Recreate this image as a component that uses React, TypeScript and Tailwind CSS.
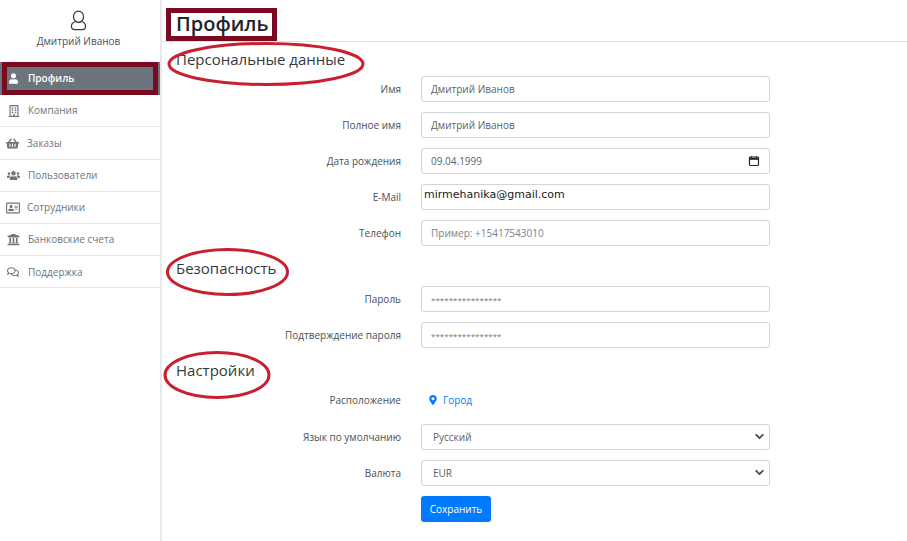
import { ChevronDown } from "lucide-react";
import { FaMapMarkerAlt, FaRegAddressCard, FaRegBuilding, FaRegComments, FaShoppingBasket, FaUniversity, FaUser, FaUsers } from "react-icons/fa";
import type { ReactNode } from "react";

const menu = [
  { label: "Компания", icon: <FaRegBuilding className="w-3 h-3" />, x: "pl-[8px]", gap: "gap-[8px]", h: "h-[32px]" },
  { label: "Заказы", icon: <FaShoppingBasket className="w-[13px] h-[13px]" />, x: "pl-[6px]", gap: "gap-[8px]", h: "h-[33px]" },
  { label: "Пользователи", icon: <FaUsers className="w-[13px] h-[13px]" />, x: "pl-[7px]", gap: "gap-[8px]", h: "h-[32px]" },
  { label: "Сотрудники", icon: <FaRegAddressCard className="w-[14px] h-[14px]" />, x: "pl-[6px]", gap: "gap-[7px]", h: "h-[32px]" },
  { label: "Банковские счета", icon: <FaUniversity className="w-[13px] h-[13px]" />, x: "pl-[7px]", gap: "gap-[8px]", h: "h-[32px]" },
  { label: "Поддержка", icon: <FaRegComments className="w-3 h-3" />, x: "pl-[7px]", gap: "gap-[9px]", h: "h-[32px] pt-[1px]" },
];

function Row({ label, children }: { label: string; children: ReactNode }) {
  return (
    <div className="flex items-center gap-5 h-[26px]">
      <label className="w-[239px] text-right text-[10px] text-[#495057]">{label}</label>
      <div className="w-[349px] relative">{children}</div>
    </div>
  );
}

const boxCls = "block w-full h-[26px] rounded-[3px] border border-[#ced4da] bg-white outline-none";
const inputCls = `${boxCls} px-[9px] text-[10px] text-[#5a6268]`;

function Field(props: { value?: string; placeholder?: string }) {
  return <input readOnly className={`${inputCls} placeholder:text-[#7b8187]`} value={props.value} placeholder={props.placeholder} />;
}

function Stars() {
  return <input readOnly className={`${boxCls} px-[9px] text-[8px] text-[#6c757d]`} value="****************" />;
}

function Picker({ value }: { value: string }) {
  return (
    <>
      <select defaultValue={value} className={`${inputCls} appearance-none pl-[11px]`}>
        <option>{value}</option>
      </select>
      <ChevronDown className="absolute right-[4px] top-[6px] w-[13px] h-[13px] text-[#495057]" strokeWidth={3.5} />
    </>
  );
}

export default function App() {
  return (
    <div className="relative flex w-[907px] h-[541px] overflow-hidden bg-white font-['Open_Sans',sans-serif]">
      {/* Sidebar */}
      <aside className="w-[162px] shrink-0 border-r-2 border-[#e6e8ea]">
        <div className="h-[62px] flex flex-col items-center pt-[10px] pr-[3px]">
          <svg viewBox="0 0 18 22" className="w-[17px] h-[21px]" fill="none" stroke="#343a40" strokeWidth="1.3">
            <ellipse cx="9" cy="7" rx="5.3" ry="6" />
            <path d="M5.5 12.3C3 13 1.5 14.8 1.5 17c0 2.6 1.6 3.6 3.6 3.6h7.8c2 0 3.6-1 3.6-3.6 0-2.2-1.5-4-4-4.7" />
          </svg>
          <span className="mt-[3px] text-[10px] text-[#495057]">Дмитрий Иванов</span>
        </div>
        <div className="relative h-[33px] bg-[#6c757d] text-white flex items-center pl-[9px] gap-[10px] text-[10px] font-semibold">
          <FaUser className="w-[9px] h-[11px]" />
          Профиль
          <div className="absolute left-[2px] top-0 w-[156px] h-[33px] border-[5px] border-[#7a0a20]" />
        </div>
        {menu.map((m) => (
          <div key={m.label} className={`${m.h} flex items-center ${m.x} ${m.gap} border-b border-[#e6e8ea] text-[10px] text-[#6c757d]`}>
            {m.icon}
            {m.label}
          </div>
        ))}
      </aside>

      {/* Main */}
      <main className="flex-1">
        <div className="h-[42px] border-b border-[#dee2e6] pt-[8px] pl-[4px]">
          <h1 className="w-fit h-[33px] border-[5px] border-[#7a0a20] pl-[5px] pr-[4px] text-[20px] leading-[21px] font-semibold text-[#212529]">Профиль</h1>
        </div>
        <h2 className="pl-[14px] h-[34px] pt-[5px] text-[15px] leading-[24px] text-[#343a40]">Персональные данные</h2>
        <div className="flex flex-col gap-[10px]">
          <Row label="Имя"><Field value="Дмитрий Иванов" /></Row>
          <Row label="Полное имя"><Field value="Дмитрий Иванов" /></Row>
          <Row label="Дата рождения">
            <Field value="09.04.1999" />
            <svg viewBox="0 0 12 12" className="absolute right-[10px] top-[7px] w-3 h-3" fill="none" stroke="#212529">
              <rect x="1.5" y="2" width="9" height="8.5" rx="1" strokeWidth="1.2" />
              <path d="M1.5 3.8h9" strokeWidth="2" />
              <path d="M3.5 1v1.5M8.5 1v1.5" strokeWidth="1.2" />
            </svg>
          </Row>
          <Row label="E-Mail">
            <div className={`${boxCls} pl-[2px] text-[11px] leading-[19px] text-[#1a1a1a] font-['DejaVu_Sans',sans-serif]`}>mirmehanika@gmail.com</div>
          </Row>
          <Row label="Телефон"><Field placeholder="Пример: +15417543010" /></Row>
        </div>
        <h2 className="pl-[14px] h-[40px] pt-[10px] text-[15px] leading-[24px] text-[#343a40]">Безопасность</h2>
        <div className="flex flex-col gap-[10px]">
          <Row label="Пароль"><Stars /></Row>
          <Row label="Подтверждение пароля"><Stars /></Row>
        </div>
        <h2 className="pl-[14px] h-[39px] pt-[10px] text-[15px] leading-[24px] text-[#343a40]">Настройки</h2>
        <Row label="Расположение">
          <span className="flex items-center gap-[6px] pl-[8px] text-[10px] text-[#007bff]">
            <FaMapMarkerAlt className="w-[8px] h-[10px]" />
            Город
          </span>
        </Row>
        <div className="flex flex-col gap-[10px] mt-[11px]">
          <Row label="Язык по умолчанию"><Picker value="Русский" /></Row>
          <Row label="Валюта"><Picker value="EUR" /></Row>
          <div className="pl-[259px]">
            <button className="block w-[70px] h-[26px] rounded-[3px] bg-[#007bff] text-white text-[10px]">Сохранить</button>
          </div>
        </div>
      </main>

      {/* Red hand-drawn marks over the headings */}
      <svg className="absolute inset-0 pointer-events-none" width="907" height="541" fill="none" stroke="#c8202f" strokeWidth="3">
        <ellipse cx="266" cy="64" rx="97" ry="20.5" />
        <ellipse cx="227.5" cy="272" rx="60" ry="22.5" />
        <ellipse cx="217" cy="375" rx="52" ry="22.5" />
      </svg>
    </div>
  );
}
